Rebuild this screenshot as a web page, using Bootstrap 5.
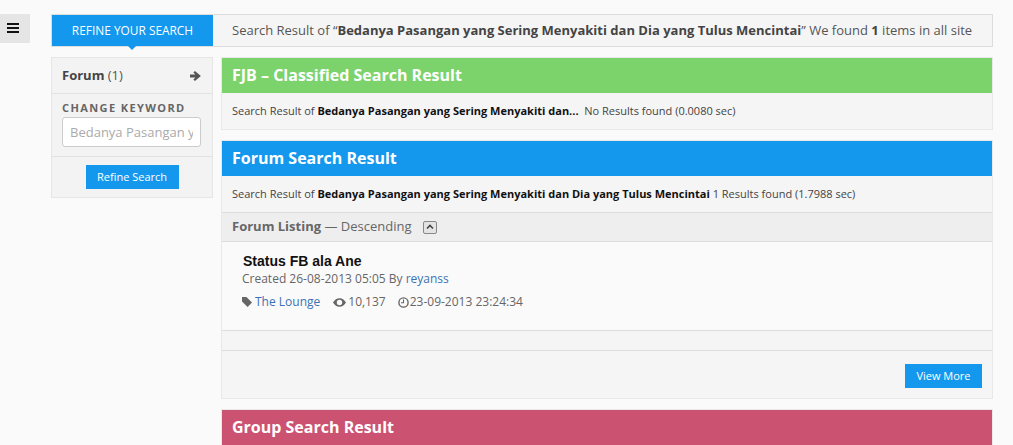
<!DOCTYPE html>
<html lang="id">
<head>
<meta charset="UTF-8">
<title>Search Result</title>
<link href="https://cdn.jsdelivr.net/npm/bootstrap@5.3.0/dist/css/bootstrap.min.css" rel="stylesheet">
<style>
body { background: #fafafa; font-family: "Open Sans", sans-serif; color: #555; height: 445px; overflow: hidden; font-size: 13px; }
.menu-toggle { width: 30px; height: 29px; background: #e5e5e5; margin-top: 14px; padding: 9px 7px 0; }
.menu-toggle span { display: block; height: 2px; background: #111; margin-bottom: 2px; width: 12px; }
.page-wrap { width: 942px; margin: 14px 0 0 21px; }
.top-bar { height: 33px; background: #f5f5f5; border: 1px solid #ddd; }
.top-tab { width: 161px; background: #1498ee; color: #fff; font-size: 11.9px; position: relative; white-space: nowrap; }
.top-tab::after { content: ""; position: absolute; left: 75px; bottom: -4px; border: 5px solid transparent; border-top-color: #1498ee; border-bottom: 0; }
.top-text { font-size: 13px; color: #555; padding-left: 19px; white-space: nowrap; }
.top-text b { color: #444; }
.body-row { margin-top: 10px; gap: 8px; }
.side-col { width: 162px; }
.side-box { background: #f3f3f3; border: 1px solid #e6e6e6; }
.side-head { height: 36px; padding: 0 10px; font-size: 13px; border-bottom: 1px solid #e2e2e2; }
.side-head b { color: #444; }
.side-kw { padding: 6px 11px 8px 10px; border-bottom: 1px solid #e2e2e2; height: 63px; }
.kw-label { font-size: 11px; font-weight: 700; letter-spacing: 1.4px; color: #666; line-height: 15px; margin-bottom: 2px; }
.kw-input { height: 30px; font-size: 13px; padding: 0 7px; border: 1px solid #ccc; border-radius: 3px; color: #999; font-family: inherit; }
.kw-input::placeholder { color: #aaa; opacity: 1; }
.side-foot { height: 40px; padding-top: 8px; text-align: center; }
.blue-btn { background: #1498ee; color: #fff; font-size: 11px; border: 0; border-radius: 0; height: 24px; width: 93px; padding: 0; font-family: inherit; line-height: 24px; white-space: nowrap; }
.main-col { width: 772px; }
.res-box { background: #f5f5f5; border: 1px solid #e8e8e8; margin-bottom: 10px; }
.res-title { height: 35px; margin: 0; line-height: 35px; padding: 0 10px; color: #fff; font-size: 16px; font-weight: 700; font-family: inherit; }
.t-green { background: #7cd36b; }
.t-blue { background: #1498ee; }
.t-red { background: #cc5272; }
.res-info { font-size: 11px; color: #444; padding: 0 10px; height: 36px; line-height: 35px; white-space: nowrap; }
.res-info b { color: #111; }
.list-head { height: 30px; background: #eee; border: 1px solid #ddd; border-width: 1px 0; padding: 0 10px; font-size: 13px; color: #666; }
.up-btn { width: 14px; height: 13px; border: 1px solid #888; border-radius: 2px; margin-left: 11px; background: #e4e4e4; }
.list-item { background: #fafafa; height: 89px; padding: 11px 20px; border-bottom: 1px solid #ddd; }
.item-title { font-family: "Liberation Sans", sans-serif; font-weight: 700; font-size: 14px; color: #111; margin: 0 0 0 1px; line-height: 17px; }
.item-meta { font-size: 12px; color: #666; line-height: 18px; }
.item-meta a, .item-tags a { color: #3a72b5; text-decoration: none; }
.item-tags { font-size: 12px; color: #666; margin-top: 5px; line-height: 18px; }
.ic-tag { margin-right: 3px; }
.ic-eye { margin: 0 2px 0 13px; }
.ic-clock { margin: 0 1px 0 12px; }
.spacer-row { height: 20px; border-bottom: 1px solid #ddd; }
.more-row { height: 47px; padding: 13px 10px 0 0; text-align: right; }
.more-row .blue-btn { width: 77px; }
</style>
</head>
<body>
<div class="d-flex">
  <div class="menu-toggle flex-shrink-0"><span></span><span></span><span></span></div>
  <div class="page-wrap flex-shrink-0">
    <div class="top-bar d-flex">
      <div class="top-tab flex-shrink-0 d-flex align-items-center justify-content-center">REFINE YOUR SEARCH</div>
      <div class="top-text d-flex align-items-center"><span>Search Result of “<b>Bedanya Pasangan yang Sering Menyakiti dan Dia yang Tulus Mencintai</b>” We found <b>1</b> items in all site</span></div>
    </div>
    <div class="body-row d-flex">
      <div class="side-col flex-shrink-0">
        <div class="side-box">
          <div class="side-head d-flex align-items-center justify-content-between">
            <span><b>Forum</b> (1)</span>
            <svg width="12" height="12" viewBox="0 0 12 12"><path d="M0 4.400h5.400L3.400 2.400 4.900.9 10.900 6l-6 5.100-1.500-1.500 2-2H0z" fill="#555"/></svg>
          </div>
          <div class="side-kw">
            <div class="kw-label">CHANGE KEYWORD</div>
            <input class="kw-input w-100" type="text" placeholder="Bedanya Pasangan yang Sering Menyakiti">
          </div>
          <div class="side-foot"><button class="blue-btn" type="button">Refine Search</button></div>
        </div>
      </div>
      <div class="main-col flex-shrink-0">
        <div class="res-box">
          <h2 class="res-title t-green">FJB – Classified Search Result</h2>
          <div class="res-info">Search Result of <b>Bedanya Pasangan yang Sering Menyakiti dan...</b>&nbsp; No Results found (0.0080 sec)</div>
        </div>
        <div class="res-box">
          <h2 class="res-title t-blue">Forum Search Result</h2>
          <div class="res-info">Search Result of <b>Bedanya Pasangan yang Sering Menyakiti dan Dia yang Tulus Mencintai</b> 1 Results found (1.7988 sec)</div>
          <div class="list-head d-flex align-items-center">
            <span><b>Forum Listing</b> — Descending</span>
            <span class="up-btn d-flex align-items-center justify-content-center"><svg width="8" height="6" viewBox="0 0 8 6"><path d="M1 4.500l3-3 3 3" fill="none" stroke="#444" stroke-width="1.600"/></svg></span>
          </div>
          <div class="list-item">
            <h3 class="item-title">Status FB ala Ane</h3>
            <div class="item-meta">Created 26-08-2013 05:05 By <a href="#">reyanss</a></div>
            <div class="item-tags d-flex align-items-center">
              <svg class="ic-tag" width="10" height="10" viewBox="0 0 10 10"><path d="M0 0h4.400L10 5.600 5.600 10 0 4.400z" fill="#666"/></svg>
              <a href="#">The Lounge</a>
              <svg class="ic-eye" width="13" height="9" viewBox="0 0 12 8"><path d="M0 4c1.500-2.600 3.600-4 6-4s4.500 1.400 6 4c-1.500 2.600-3.600 4-6 4S1.500 6.600 0 4zm6 2.500a2.500 2.500 0 100-5 2.500 2.500 0 000 5z" fill="#666"/></svg>
              <span>10,137</span>
              <svg class="ic-clock" width="11" height="11" viewBox="0 0 11 11"><circle cx="5.500" cy="5.500" r="4.600" fill="none" stroke="#666" stroke-width="1.400"/><path d="M5.500 2.500v3.200H3" fill="none" stroke="#666" stroke-width="1.100"/></svg>
              <span>23-09-2013 23:24:34</span>
            </div>
          </div>
          <div class="spacer-row"></div>
          <div class="more-row"><button class="blue-btn" type="button">View More</button></div>
        </div>
        <div class="res-box">
          <h2 class="res-title t-red">Group Search Result</h2>
        </div>
      </div>
    </div>
  </div>
</div>
</body>
</html>
